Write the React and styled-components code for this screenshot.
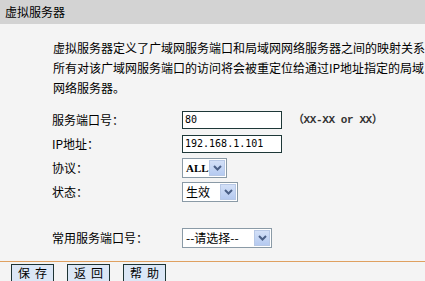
import React from "react";
import styled, { createGlobalStyle } from "styled-components";

const Global = createGlobalStyle`
  html, body { margin: 0; padding: 0; background: #f4f4f4; }
  body { font-family: "Noto Sans CJK SC", "Liberation Sans", sans-serif; font-size: 12px; color: #000; }
`;

const Page = styled.div`
  width: 425px;
  height: 281px;
  overflow: hidden;
  background: #f4f4f4;
`;

const Header = styled.div`
  height: 24px;
  background: #d3d3d3;
  padding-left: 5px;
  display: flex;
  align-items: center;
  font-size: 12px;
  line-height: 14px;
`;

const Desc = styled.p`
  margin: 14px 0 0 0;
  padding-left: 53px;
  font-size: 12px;
  line-height: 20px;
  white-space: nowrap;
`;

const Form = styled.div`
  margin-top: 12px;
  padding-left: 52px;
  display: flex;
  flex-direction: column;
`;

const Row = styled.div`
  display: flex;
  align-items: flex-start;
  height: 24px;
  margin-top: ${(p) => p.$gap || 0}px;
`;

const Label = styled.div`
  width: 130px;
  line-height: 18px;
  margin-top: 1px;
  font-size: 12px;
`;

const TextInput = styled.div`
  box-sizing: border-box;
  width: 100px;
  height: 18px;
  margin-top: 1px;
  border: 1px solid #1e3838;
  background: #fff;
  padding-left: 2px;
  font-family: "DejaVu Sans Mono", "Liberation Mono", monospace;
  font-size: 10px;
  line-height: 16px;
`;

const Hint = styled.div`
  margin-left: 11px;
  margin-top: 1px;
  line-height: 18px;
  font-family: "Liberation Mono", "Noto Sans CJK SC", monospace;
  font-size: 11px;
  font-weight: bold;
  color: #333;
  letter-spacing: -0.4px;
`;

const SelectBox = styled.div`
  box-sizing: border-box;
  width: ${(p) => p.$w}px;
  height: 20px;
  border: 1px solid #8a9aa6;
  background: #fff;
  display: flex;
  align-items: center;
  justify-content: space-between;
  padding: 0 1px 0 3px;
`;

const SelectText = styled.span`
  font-size: ${(p) => (p.$serif ? 11 : 12)}px;
  line-height: 16px;
  font-family: ${(p) => (p.$serif ? '"Liberation Serif", "Noto Sans CJK SC", serif' : '"Noto Sans CJK SC", sans-serif')};
  font-weight: ${(p) => (p.$serif ? "bold" : "normal")};
`;

const Arrow = styled.span`
  box-sizing: border-box;
  width: 16px;
  height: 16px;
  border: 1px solid #b7c8e6;
  background: linear-gradient(#d3e0f7, #b5caf0);
  display: flex;
  align-items: center;
  justify-content: center;
`;

const Divider = styled.div`
  margin-top: 9px;
  height: 1px;
  background: #dfa060;
`;

const Buttons = styled.div`
  display: flex;
  gap: 13px;
  padding-left: 11px;
  margin-top: 2px;
`;

const Button = styled.button`
  box-sizing: border-box;
  width: 43px;
  height: 17px;
  padding: 0;
  border: 1px solid #1e3434;
  border-bottom: none;
  background: #dbe7f6;
  font-family: "Noto Sans CJK SC", sans-serif;
  font-size: 12px;
  line-height: 14px;
  letter-spacing: 5px;
  text-indent: 5px;
  color: #000;
`;

const Chevron = () => (
  <svg width="9" height="6" viewBox="0 0 9 6">
    <path d="M1 1 L4.5 4.5 L8 1" fill="none" stroke="#4a5f86" strokeWidth="2" />
  </svg>
);

const Select = ({ w, text, serif }) => (
  <SelectBox $w={w}>
    <SelectText $serif={serif}>{text}</SelectText>
    <Arrow>
      <Chevron />
    </Arrow>
  </SelectBox>
);

export default function App() {
  return (
    <Page>
      <Global />
      <Header>虚拟服务器</Header>
      <Desc>
        虚拟服务器定义了广域网服务端口和局域网网络服务器之间的映射关系
        <br />
        所有对该广域网服务端口的访问将会被重定位给通过IP地址指定的局域
        <br />
        网络服务器。
      </Desc>
      <Form>
        <Row>
          <Label>服务端口号：</Label>
          <TextInput>80</TextInput>
          <Hint>（XX-XX or XX）</Hint>
        </Row>
        <Row>
          <Label>IP地址：</Label>
          <TextInput>192.168.1.101</TextInput>
        </Row>
        <Row>
          <Label>协议：</Label>
          <Select w={45} text="ALL" serif />
        </Row>
        <Row>
          <Label>状态：</Label>
          <Select w={56} text="生效" />
        </Row>
        <Row $gap={22}>
          <Label>常用服务端口号：</Label>
          <Select w={90} text="--请选择--" />
        </Row>
      </Form>
      <Divider />
      <Buttons>
        <Button>保存</Button>
        <Button>返回</Button>
        <Button>帮助</Button>
      </Buttons>
    </Page>
  );
}
